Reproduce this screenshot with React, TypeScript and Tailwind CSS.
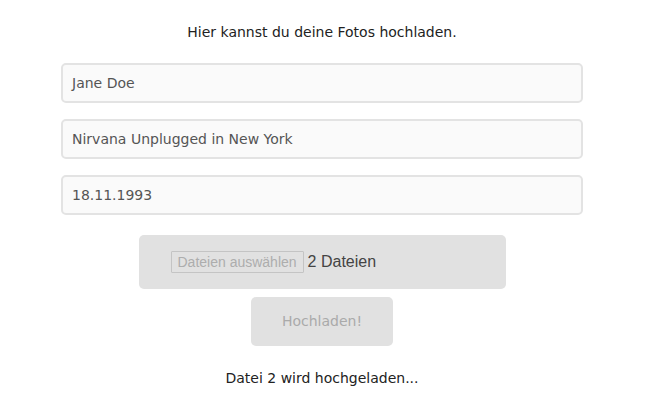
import React from "react";

export default function App() {
  const font = { fontFamily: '"DejaVu Sans", Verdana, sans-serif' };
  return (
    <div className="w-[644px] flex flex-col items-center bg-white text-[14px] text-[#222]" style={font}>
      <p className="mt-[24px] h-[17px] leading-[17px]">Hier kannst du deine Fotos hochladen.</p>
      <div className="mt-[22px] flex flex-col gap-[16px]">
        {["Jane Doe", "Nirvana Unplugged in New York", "18.11.1993"].map((v) => (
          <div
            key={v}
            className="w-[522px] h-[40px] border-2 border-[#e3e3e3] rounded-[5px] bg-[#fafafa] px-[9px] flex items-center text-[#555]"
          >
            {v}
          </div>
        ))}
      </div>
      <div className="mt-[20px] w-[367px] h-[54px] rounded-[5px] bg-[#e1e1e1] flex items-center pl-[32px]">
        <span
          className="h-[22px] px-[6px] border border-[#c4c4c4] text-[#adadad] text-[14px] leading-[20px] rounded-[1px]"
          style={{ fontFamily: '"Liberation Sans", Arial, sans-serif' }}
        >
          Dateien auswählen
        </span>
        <span className="ml-[4px] text-[#444] text-[16px]" style={{ fontFamily: '"Liberation Sans", Arial, sans-serif' }}>
          2 Dateien
        </span>
      </div>
      <div className="mt-[8px] w-[142px] h-[49px] rounded-[5px] bg-[#e1e1e1] flex items-center justify-center text-[#aaa]">
        Hochladen!
      </div>
      <p className="mt-[24px] leading-[17px]">Datei 2 wird hochgeladen...</p>
    </div>
  );
}
